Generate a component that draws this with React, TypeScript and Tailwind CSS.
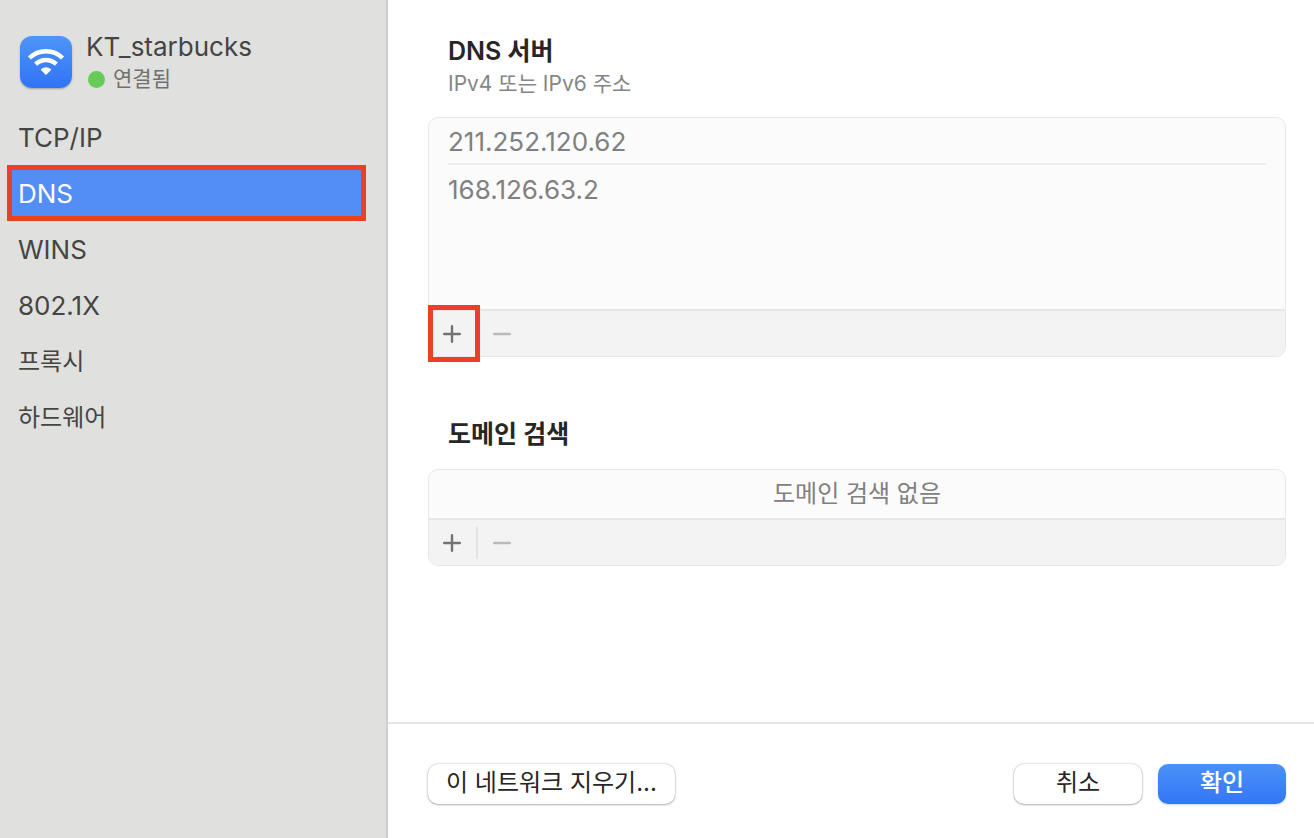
import { useState } from "react";

const tabs = [
  { name: "TCP/IP", size: "text-[26px]" },
  { name: "DNS", size: "text-[26px]" },
  { name: "WINS", size: "text-[26px]" },
  { name: "802.1X", size: "text-[26px]" },
  { name: "프록시", size: "text-2xl" },
  { name: "하드웨어", size: "text-2xl" },
];

const servers = ["211.252.120.62", "168.126.63.2"];

function WifiIcon() {
  return (
    <svg
      viewBox="0 0 52 52"
      className="size-[52px] shrink-0 rounded-xl bg-linear-to-b from-[#4f95f8] to-[#3173f6] shadow-[0_1px_2px_rgba(0,0,0,0.3)]"
      aria-hidden="true"
    >
      <g fill="none" stroke="#fff" strokeWidth="4.4">
        <path d="M9.4 22a23.8 23.8 0 0 1 33.2 0" />
        <path d="M15.6 28.2a15 15 0 0 1 20.8 0" />
      </g>
      <path
        d="M26 38.9l-4.8-4.6c-.5-.5-.5-1 0-1.4a7.4 7.4 0 0 1 9.6 0c.5.4.5.9 0 1.4z"
        fill="#fff"
      />
    </svg>
  );
}

function Toolbar({ label, marked = false }: { label: string; marked?: boolean }) {
  return (
    <div className="relative flex h-[47px] items-center rounded-b-[9px] border-t-2 border-[#e6e6e6] bg-[#f3f3f3]">
      <button
        type="button"
        aria-label={`${label} 추가`}
        className="flex h-8 w-[47px] items-center justify-center pr-px"
      >
        <svg viewBox="0 0 18 18" className="size-[18px]">
          <path
            d="M1.2 9h15.6M9 1.2v15.6"
            stroke="#727272"
            strokeWidth="2.4"
            strokeLinecap="round"
          />
        </svg>
      </button>
      <span className="h-8 w-[2px] bg-[#e3e3e3]" />
      <button
        type="button"
        aria-label={`${label} 제거`}
        disabled
        className="flex h-8 w-[47px] items-center justify-center"
      >
        <svg viewBox="0 0 18 18" className="size-[18px]">
          <path
            d="M1.2 9h15.6"
            stroke="#bababa"
            strokeWidth="2.4"
            strokeLinecap="round"
          />
        </svg>
      </button>
      {marked && (
        <span className="pointer-events-none absolute -top-[6px] -left-px h-[57px] w-[52px] border-5 border-[#eb4025]" />
      )}
    </div>
  );
}

export default function App() {
  const [active, setActive] = useState("DNS");

  return (
    <div className="flex min-h-screen bg-white font-['Inter','Noto_Sans_CJK_KR',sans-serif]">
      <aside className="w-[388px] shrink-0 border-r-2 border-[#cfcfcd] bg-[#e0e0de] text-[#454543]">
        <div className="flex h-[109px] gap-[14px] pt-9 pl-5">
          <WifiIcon />
          <div className="-mt-1">
            <p className="text-[26px] leading-[30px]">KT_starbucks</p>
            <p className="flex items-center gap-2 pt-px pl-[2px] text-[21px] leading-8 text-[#70706e]">
              <span className="size-[17px] rounded-full bg-[#64cc57]" />
              연결됨
            </p>
          </div>
        </div>
        <nav className="flex flex-col pr-5 pl-[7px]">
          {tabs.map((tab) => (
            <button
              key={tab.name}
              type="button"
              onClick={() => setActive(tab.name)}
              className={`h-14 border-5 pt-px pl-[6px] text-left ${tab.size} ${
                tab.name === active
                  ? "border-[#eb4025] bg-[#528ef5] text-white"
                  : "border-transparent"
              }`}
            >
              {tab.name}
            </button>
          ))}
        </nav>
      </aside>

      <div className="flex min-w-0 flex-1 flex-col">
        <main className="flex-1 px-10 pt-[35px] pr-7">
          <section>
            <h2 className="pl-5 text-[25px] leading-8 font-semibold text-[#262626]">
              DNS 서버
            </h2>
            <p className="pl-5 text-[21px] leading-[34px] text-[#858585]">
              IPv4 또는 IPv6 주소
            </p>
            <div className="mt-4 rounded-[10px] border border-[#e8e8e8] bg-[#fbfbfb]">
              <ul className="flex h-[191px] flex-col gap-px px-[19px] text-[26px] text-[#808080]">
                {servers.map((server) => (
                  <li
                    key={server}
                    className="flex h-[47px] items-center border-b-2 border-[#eee] pt-[2px] last:border-transparent"
                  >
                    {server}
                  </li>
                ))}
              </ul>
              <Toolbar label="DNS 서버" marked />
            </div>
          </section>

          <section className="mt-[61px]">
            <h2 className="pl-5 text-[25px] leading-8 font-semibold text-[#262626]">
              도메인 검색
            </h2>
            <div className="mt-[19px] rounded-[10px] border border-[#e8e8e8] bg-[#fbfbfb]">
              <p className="h-12 text-center text-2xl leading-[48px] text-[#808080]">
                도메인 검색 없음
              </p>
              <Toolbar label="도메인 검색" />
            </div>
          </section>
        </main>

        <footer className="flex h-[116px] items-start gap-4 border-t-2 border-[#e4e4e4] pt-10 pr-7 pl-10 text-2xl text-[#262626]">
          <button
            type="button"
            className="mr-auto h-10 rounded-[10px] bg-white px-[18px] pb-[2px] shadow-[0_0_2px_rgba(0,0,0,0.3),0_1px_2px_rgba(0,0,0,0.25)]"
          >
            이 네트워크 지우기...
          </button>
          <button
            type="button"
            className="h-10 w-32 rounded-[10px] bg-white pb-[2px] shadow-[0_0_2px_rgba(0,0,0,0.3),0_1px_2px_rgba(0,0,0,0.25)]"
          >
            취소
          </button>
          <button
            type="button"
            className="h-10 w-32 rounded-[10px] bg-linear-to-b from-[#4b91f8] to-[#3376f6] pb-[2px] font-medium text-white shadow-[0_1px_2px_rgba(51,118,246,0.3)]"
          >
            확인
          </button>
        </footer>
      </div>
    </div>
  );
}
